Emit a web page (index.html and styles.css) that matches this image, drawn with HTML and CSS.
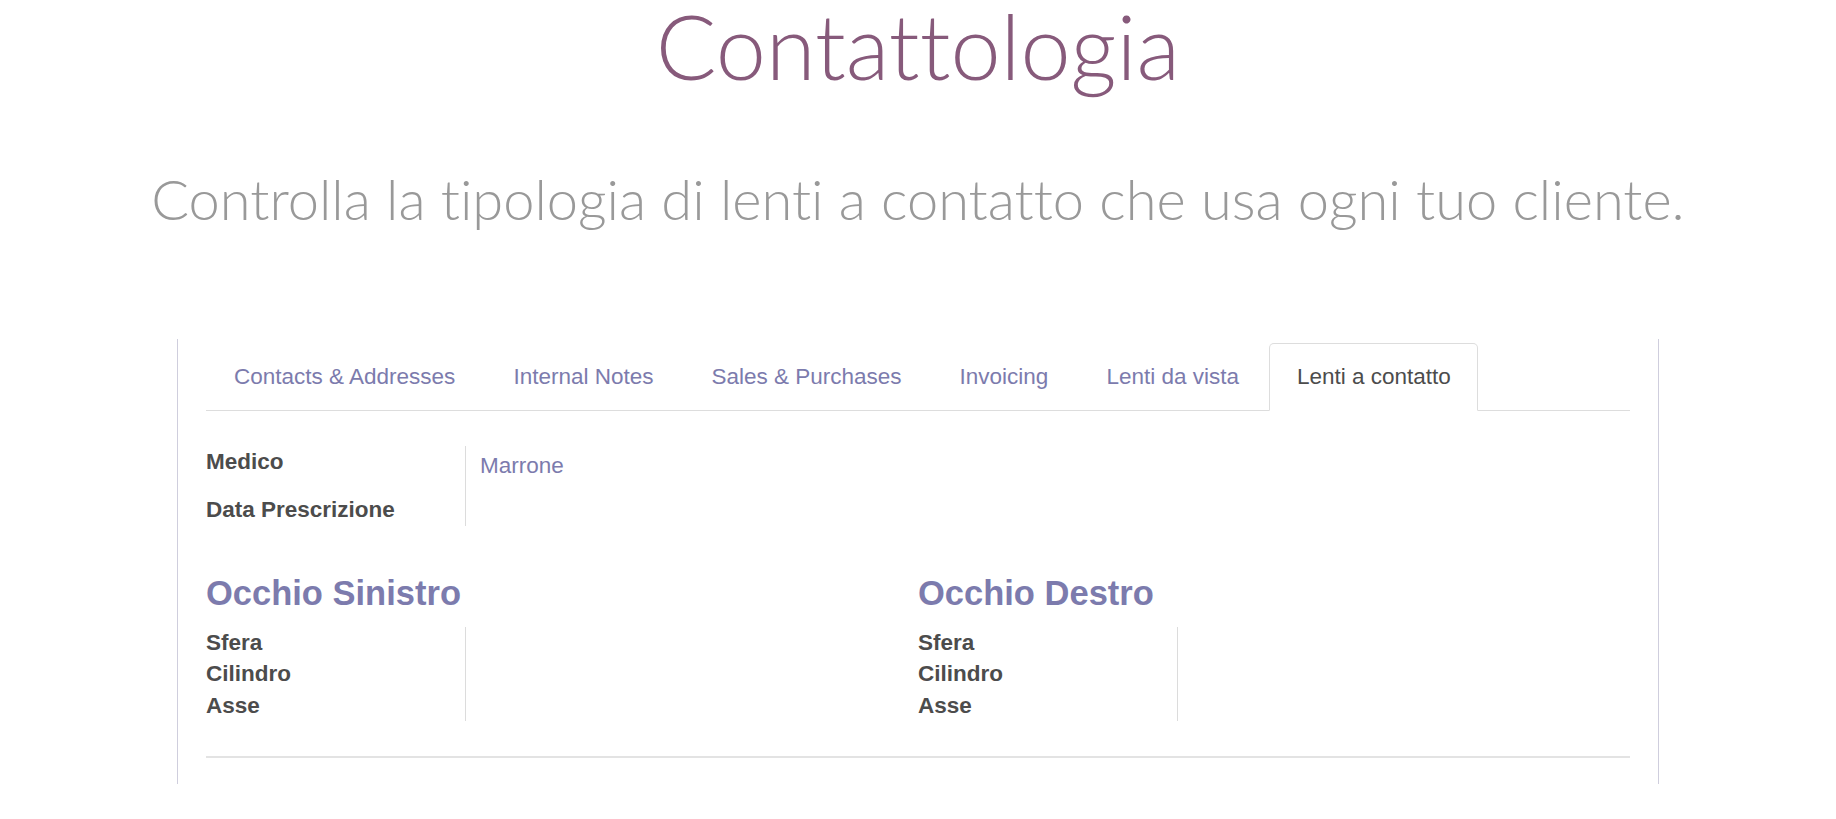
FILE: index.html
```html
<!DOCTYPE html>
<html lang="it">
<head>
<meta charset="utf-8">
<title>Contattologia</title>
<link rel="stylesheet" href="styles.css">
</head>
<body>
<header class="intro">
  <h1 class="title">Contattologia</h1>
  <p class="lead">Controlla la tipologia di lenti a contatto che usa ogni tuo cliente.</p>
</header>
<section class="sheet">
  <ul class="tabs">
    <li class="tab"><a>Contacts &amp; Addresses</a></li>
    <li class="tab"><a>Internal Notes</a></li>
    <li class="tab"><a>Sales &amp; Purchases</a></li>
    <li class="tab"><a>Invoicing</a></li>
    <li class="tab"><a>Lenti da vista</a></li>
    <li class="tab active"><a>Lenti a contatto</a></li>
  </ul>
  <div class="fields top">
    <div class="label first">Medico</div>
    <div class="value first"><span class="link">Marrone</span></div>
    <div class="label">Data Prescrizione</div>
    <div class="value"></div>
  </div>
  <div class="eyes">
    <div class="eye">
      <h2 class="sep">Occhio Sinistro</h2>
      <div class="fields">
        <div class="label">Sfera</div><div class="value"></div>
        <div class="label">Cilindro</div><div class="value"></div>
        <div class="label">Asse</div><div class="value"></div>
      </div>
    </div>
    <div class="eye">
      <h2 class="sep">Occhio Destro</h2>
      <div class="fields">
        <div class="label">Sfera</div><div class="value"></div>
        <div class="label">Cilindro</div><div class="value"></div>
        <div class="label">Asse</div><div class="value"></div>
      </div>
    </div>
  </div>
  <div class="bottom-line"></div>
</section>
</body>
</html>
```
FILE: styles.css
```css
html, body {
  margin: 0;
  padding: 0;
  background: #fff;
}
body {
  font-family: "Liberation Sans", Arial, sans-serif;
  font-size: 22.5px;
  line-height: 31.5px;
  color: #4c4c4c;
}
.intro {
  text-align: center;
  font-family: Lato, "Open Sans", sans-serif;
  font-weight: 300;
  font-variant-ligatures: none;
}
.title {
  margin: 0;
  font-size: 90px;
  font-weight: 300;
  line-height: 90px;
  color: #875a7b;
}
.lead {
  margin: 74px 0 0;
  font-size: 56px;
  font-weight: 300;
  line-height: 70px;
  color: #999;
}
.sheet {
  width: 1424px;
  margin: 105px auto 0;
  padding: 4px 28px 26px;
  border-left: 1px solid #cfcedd;
  border-right: 1px solid #cfcedd;
}
.tabs {
  list-style: none;
  margin: 0;
  padding: 0;
  display: flex;
  border-bottom: 1px solid #ddd;
}
.tab {
  margin-bottom: -1px;
  margin-right: 2px;
}
.tab a {
  display: block;
  padding: 17px 27px 17px 27px;
  border: 1px solid transparent;
  border-radius: 5px 5px 0 0;
  color: #7c7bad;
}
.tab.active a {
  padding-right: 26px;
  color: #4c4c4c;
  background: #fff;
  border-color: #ddd #ddd transparent;
}
.fields {
  display: grid;
  grid-template-columns: 259px 1fr;
}
.fields.top {
  margin-top: 35px;
}
.label {
  font-weight: bold;
  color: #4c4c4c;
}
.label.first {
  padding-bottom: 17px;
}
.value {
  border-left: 1px solid #dcdcdc;
  padding-left: 14px;
}
.value.first {
  padding-top: 4px;
}
.link {
  color: #7c7bad;
}
.eyes {
  display: grid;
  grid-template-columns: 1fr 1fr;
  margin-top: 49px;
}
.sep {
  margin: 0 0 15px;
  font-size: 34.5px;
  line-height: 37px;
  font-weight: bold;
  color: #7c7bad;
}
.bottom-line {
  margin-top: 35px;
  border-top: 2px solid #e3e3e3;
}
```
